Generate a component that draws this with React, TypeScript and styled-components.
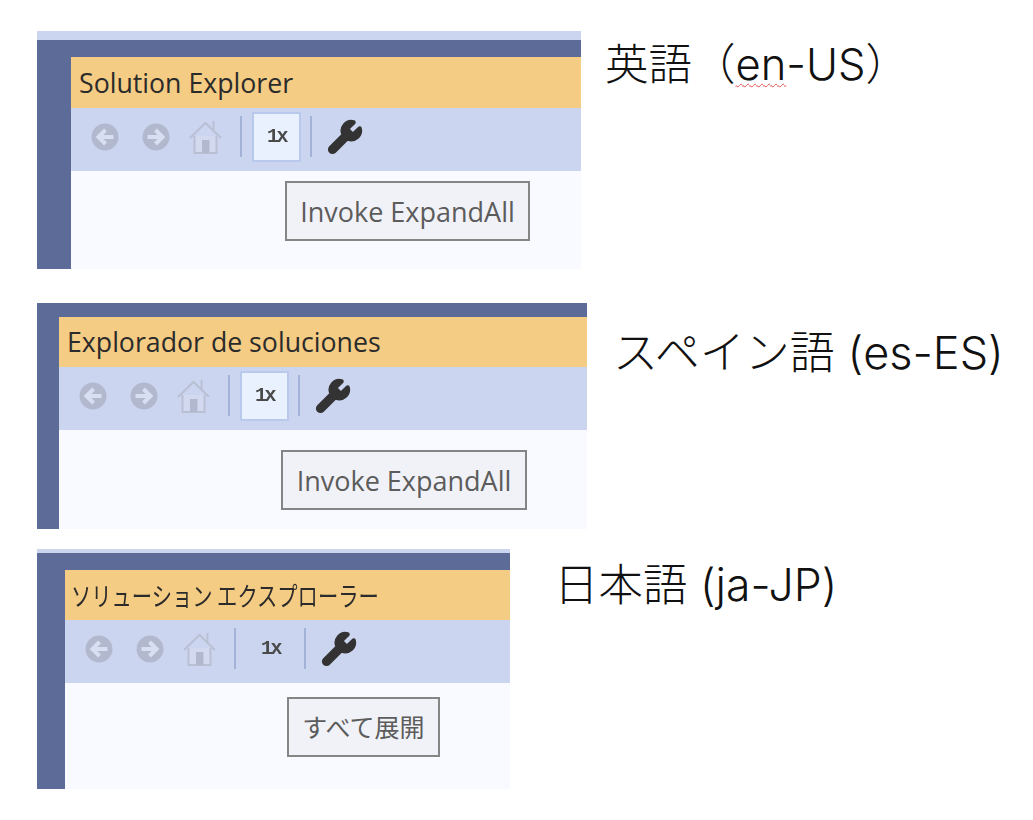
import styled, { createGlobalStyle } from 'styled-components';
import { Wrench } from 'lucide-react';

const GlobalStyle = createGlobalStyle`
  html, body {
    margin: 0;
    padding: 0;
    background: #fff;
  }
`;

const Page = styled.div`
  width: 1033px;
  height: 820px;
  overflow: hidden;
  box-sizing: border-box;
  padding: 31px 0 0 37px;
  display: flex;
  flex-direction: column;
`;

const Row = styled.section<{ $top: number; $gap: number }>`
  display: flex;
  align-items: flex-start;
  gap: ${props => props.$gap}px;
  margin-top: ${props => props.$top}px;
`;

const Panel = styled.div<{ $width: number; $height: number; $strip: number; $frame: number; $gutter: number }>`
  width: ${props => props.$width}px;
  height: ${props => props.$height}px;
  flex: none;
  box-sizing: border-box;
  background: #5d6b99;
  border-top: ${props => props.$strip}px solid #ccd5f0;
  padding: ${props => props.$frame}px 0 0 ${props => props.$gutter}px;
  display: flex;
  flex-direction: column;
`;

const TitleBar = styled.div<{ $height: number }>`
  height: ${props => props.$height}px;
  flex: none;
  box-sizing: border-box;
  background: #f5cc84;
  display: flex;
  align-items: center;
  padding-left: 8px;
  padding-bottom: 1px;
  color: #2b2b2b;
  font: 26.7px "Open Sans", "Noto Sans CJK JP", sans-serif;
  white-space: nowrap;
`;

const JaTitle = styled.span`
  display: block;
  margin-left: -2px;
  font: 26px "Noto Sans CJK JP", sans-serif;
  transform: scaleX(0.78);
  transform-origin: left center;
`;

const Toolbar = styled.div`
  height: 63px;
  flex: none;
  box-sizing: border-box;
  background: #ccd5f0;
  padding-left: 20px;
  padding-bottom: 6px;
  display: flex;
  align-items: center;
`;

const NavIcon = styled.svg<{ $after: number }>`
  flex: none;
  margin-right: ${props => props.$after}px;
  filter: blur(0.5px);
`;

const Separator = styled.div`
  width: 2px;
  height: 41px;
  flex: none;
  background: #a3b3d6;
  filter: blur(0.3px);
`;

const Zoom = styled.div<{ $active?: boolean }>`
  width: 49px;
  height: 50px;
  flex: none;
  box-sizing: border-box;
  margin: 0 9px 0 10px;
  border: 2px solid ${props => (props.$active ? '#b9c9ec' : 'transparent')};
  background: ${props => (props.$active ? '#eaf1fe' : 'transparent')};
  display: flex;
  align-items: center;
  justify-content: center;
  color: #4a4a4a;
  font: bold 20px "Liberation Mono", monospace;
  letter-spacing: -2.5px;
  filter: blur(0.4px);
`;

const WrenchIcon = styled(Wrench)`
  flex: none;
  margin-left: 14px;
  fill: #333;
  color: #333;
  filter: blur(0.3px);
`;

const Body = styled.div<{ $top: number; $left: number }>`
  flex: 1;
  background: #f9faff;
  padding: ${props => props.$top}px 0 0 ${props => props.$left}px;
`;

const ActionButton = styled.button<{ $width: number; $size: number; $lift?: number }>`
  width: ${props => props.$width}px;
  height: 60px;
  box-sizing: border-box;
  padding: 1px 0 ${props => props.$lift ?? 0}px;
  display: block;
  background: #f1f2f7;
  border: 2px solid #858585;
  border-radius: 0;
  color: #5c5c5c;
  font: ${props => props.$size}px "Open Sans", "Noto Sans CJK JP", sans-serif;
  white-space: nowrap;
`;

const Caption = styled.div<{ $offset: number; $size: number }>`
  padding-top: ${props => props.$offset}px;
  color: #111;
  font: 300 ${props => props.$size}px/1.2 Inter, "Noto Sans CJK JP", sans-serif;
  white-space: nowrap;
`;

const Misspelled = styled.span`
  text-decoration: underline wavy #e2504f 1px;
  text-underline-offset: 3px;
`;

const BackIcon = () => (
  <NavIcon $after={23} width="28" height="28" viewBox="0 0 28 28">
    <circle cx="14" cy="14" r="13.5" fill="#b2b9cf" />
    <path d="M22.5 14H8M14.5 7l-7 7 7 7" fill="none" stroke="#d8dff3" strokeWidth="4" />
  </NavIcon>
);

const ForwardIcon = () => (
  <NavIcon $after={19} width="28" height="28" viewBox="0 0 28 28">
    <circle cx="14" cy="14" r="13.5" fill="#b2b9cf" />
    <path d="M5.5 14H20M13.5 7l7 7-7 7" fill="none" stroke="#d8dff3" strokeWidth="4" />
  </NavIcon>
);

const HomeIcon = () => (
  <NavIcon $after={18} width="33" height="34" viewBox="0 0 33 34">
    <path d="M1 18 16.5 3 32 18" fill="none" stroke="#b9c0d4" strokeWidth="2" />
    <path d="M5.5 16v17h22V16" fill="#d3daf0" stroke="#b9c0d4" strokeWidth="2" />
    <path d="M24.5 10V1" fill="none" stroke="#b9c0d4" strokeWidth="2" />
    <rect x="13" y="20" width="7.5" height="13" fill="#b2b9cf" />
  </NavIcon>
);

const Tools = ({ active }: { active?: boolean }) => (
  <Toolbar>
    <BackIcon />
    <ForwardIcon />
    <HomeIcon />
    <Separator />
    <Zoom $active={active}>1x</Zoom>
    <Separator />
    <WrenchIcon size={38} strokeWidth={1.6} />
  </Toolbar>
);

const App = () => {
  return (
    <Page>
      <GlobalStyle />
      <Row $top={0} $gap={24}>
        <Panel $width={544} $height={238} $strip={9} $frame={17} $gutter={34}>
          <TitleBar $height={51}>Solution Explorer</TitleBar>
          <Tools active />
          <Body $top={10} $left={214}>
            <ActionButton $width={245} $size={27}>Invoke ExpandAll</ActionButton>
          </Body>
        </Panel>
        <Caption $offset={7} $size={43.5}>
          英語（<Misspelled>en</Misspelled>-US）
        </Caption>
      </Row>
      <Row $top={34} $gap={26}>
        <Panel $width={550} $height={226} $strip={0} $frame={14} $gutter={22}>
          <TitleBar $height={50}>Explorador de soluciones</TitleBar>
          <Tools active />
          <Body $top={20} $left={222}>
            <ActionButton $width={246} $size={27}>Invoke ExpandAll</ActionButton>
          </Body>
        </Panel>
        <Caption $offset={23} $size={45}>スペイン語 (es-ES)</Caption>
      </Row>
      <Row $top={20} $gap={44}>
        <Panel $width={473} $height={240} $strip={4} $frame={17} $gutter={28}>
          <TitleBar $height={50}>
            <JaTitle>ソリューション エクスプローラー</JaTitle>
          </TitleBar>
          <Tools />
          <Body $top={14} $left={222}>
            <ActionButton $width={153} $size={25} $lift={3}>すべて展開</ActionButton>
          </Body>
        </Panel>
        <Caption $offset={10} $size={44.5}>日本語 (ja-JP)</Caption>
      </Row>
    </Page>
  );
};

export default App;
